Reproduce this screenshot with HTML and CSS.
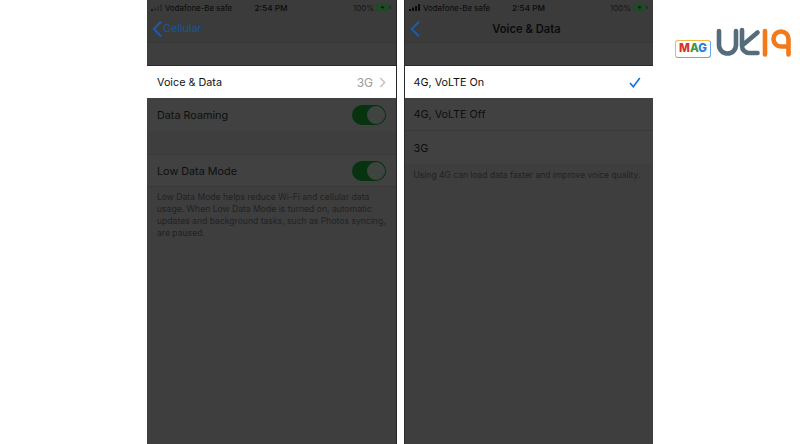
FILE: index.html
```html
<!DOCTYPE html>
<html lang="en">
<head>
<meta charset="utf-8">
<title>Voice &amp; Data</title>
<link rel="stylesheet" href="styles.css">
</head>
<body>
<main class="stage">
  <section class="phone phone-left">
    <div class="status">
      <span class="carrier"><svg class="signal" width="11" height="7" viewBox="0 0 11 7"><rect x="0" y="5" width="2" height="2" fill="#1a1a1a"/><rect x="3" y="3.5" width="2" height="3.5" fill="#2c2c2c"/><rect x="6" y="2" width="2" height="5" fill="#2e2e2e"/><rect x="9" y="0" width="2" height="7" fill="#2e2e2e"/></svg>Vodafone-Be safe</span>
      <span class="time">2:54 PM</span>
      <span class="batt">100%<svg width="15" height="7" viewBox="0 0 15 7"><rect width="13" height="7" rx="1.5" fill="#1f4a25"/><rect x="13.4" y="2" width="1.2" height="3" fill="#242424"/><path d="M7 1 4.5 4h2L6 6l2.6-3.2h-2z" fill="#10190f"/></svg></span>
    </div>
    <nav class="navbar">
      <svg class="chev" width="10" height="16" viewBox="0 0 10 16"><path d="M8.5 1.2 1.8 8l6.7 6.8" fill="none" stroke="#1c5ca8" stroke-width="2" stroke-linecap="round"/></svg>
      <span class="back">Cellular</span>
    </nav>
    <div class="band"></div>
    <div class="row row-on">
      <span>Voice &amp; Data</span>
      <span class="value">3G<svg width="7" height="11" viewBox="0 0 7 11"><path d="M1.3 1 5.6 5.5 1.3 10" fill="none" stroke="#c4c4c6" stroke-width="1.5"/></svg></span>
    </div>
    <div class="row"><span>Data Roaming</span><span class="switch"><i class="knob"></i></span></div>
    <div class="spacer"></div>
    <div class="row row-top"><span>Low Data Mode</span><span class="switch"><i class="knob"></i></span></div>
    <p class="note">Low Data Mode helps reduce Wi-Fi and cellular data usage. When Low Data Mode is turned on, automatic updates and background tasks, such as Photos syncing, are paused.</p>
  </section>

  <section class="phone phone-right">
    <div class="status">
      <span class="carrier"><svg class="signal" width="11" height="7" viewBox="0 0 11 7"><rect x="0" y="5" width="2" height="2" fill="#0c0c0c"/><rect x="3" y="3.5" width="2" height="3.5" fill="#0c0c0c"/><rect x="6" y="2" width="2" height="5" fill="#0c0c0c"/><rect x="9" y="0" width="2" height="7" fill="#0c0c0c"/></svg>Vodafone-Be safe</span>
      <span class="time">2:54 PM</span>
      <span class="batt">100%<svg width="15" height="7" viewBox="0 0 15 7"><rect width="13" height="7" rx="1.5" fill="#1f4a25"/><rect x="13.4" y="2" width="1.2" height="3" fill="#242424"/><path d="M7 1 4.5 4h2L6 6l2.6-3.2h-2z" fill="#10190f"/></svg></span>
    </div>
    <nav class="navbar">
      <svg class="chev" width="10" height="16" viewBox="0 0 10 16"><path d="M8.5 1.2 1.8 8l6.7 6.8" fill="none" stroke="#1c5ca8" stroke-width="2" stroke-linecap="round"/></svg>
      <span class="title">Voice &amp; Data</span>
    </nav>
    <div class="band"></div>
    <div class="row row-on">
      <span>4G, VoLTE On</span>
      <svg class="check" width="12" height="11" viewBox="0 0 12 11"><path d="M1 6 4.3 9.7 10.8 1" fill="none" stroke="#0a70e8" stroke-width="1.6"/></svg>
    </div>
    <div class="row row-line"><span>4G, VoLTE Off</span></div>
    <div class="row"><span>3G</span></div>
    <p class="note note-short">Using 4G can load data faster and improve voice quality.</p>
  </section>

  <div class="logo">
    <span class="mag"><b class="m">M</b><b class="a">A</b><b class="g">G</b></span>
    <svg class="mark" width="76" height="32" viewBox="0 0 76 32">
      <path d="M3 4v14a8.5 8.5 0 0 0 17 0V4" fill="none" stroke="#566c7a" stroke-width="4.6" stroke-linecap="round"/>
      <path d="M26 3v16a7 7 0 0 0 7 7h8.5M28 17 41.5 5.5" fill="none" stroke="#566c7a" stroke-width="4.6" stroke-linecap="round" stroke-linejoin="round"/>
      <path d="M49 4v23.5" fill="none" stroke="#f27a1a" stroke-width="4.6" stroke-linecap="round"/>
      <path d="M72.5 12a7.5 7.5 0 1 0-7.5 7.5h7.5M72.5 12v15.5" fill="none" stroke="#f27a1a" stroke-width="4.6" stroke-linecap="round"/>
    </svg>
  </div>
</main>
</body>
</html>
```
FILE: styles.css
```css
* { box-sizing: border-box; }
html, body { margin: 0; height: 100%; background: #fff; overflow: hidden; }
body { font-family: Inter, "Liberation Sans", sans-serif; }
.stage { display: flex; height: 444px; padding-left: 147px; }
.phone { display: flex; flex-direction: column; height: 444px; background: #3e3e3e; color: #111; }
.phone-left { width: 250px; margin-right: 7px; border-right: 1px solid #262626; }
.phone-right { width: 249px; border-left: 1px solid #2a2a2a; }
.status { display: grid; grid-template-columns: 1fr auto 1fr; align-items: center; height: 15px; padding: 0 5px 0 4px; font-size: 7.9px; color: #0a0a0a; background: #3b3b3b; }
.carrier { display: flex; align-items: center; gap: 3px; }
.batt { display: flex; align-items: center; justify-content: flex-end; gap: 2px; color: #151515; }
.time { font-size: 8.2px; font-weight: 500; }
.navbar { display: flex; align-items: center; height: 28px; padding-left: 5px; gap: 1px; background: #3b3b3b; border-bottom: 1px solid #373737; }
.back { font-size: 10.8px; color: #1c5496; }
.title { flex: 1; padding-right: 21px; text-align: center; font-size: 11.2px; font-weight: 600; color: #0c0c0c; }
.band { height: 23px; background: #3e3e3e; border-bottom: 1px solid #2a2a2a; }
.row { display: flex; justify-content: space-between; align-items: center; flex: none; height: 33px; padding: 1px 10px 0; font-size: 10.8px; background: #414141; color: #0e0e0e; }
.row-on { height: 32px; padding-top: 0; background: #fff; color: #111; }
.row-top { border-top: 1px solid #393939; border-bottom: 1px solid #393939; }
.row-line { border-bottom: 1px solid #393939; }
.phone-left .row-on { padding-right: 10px; }
.phone-right .row-on { padding-right: 12px; }
.phone-right .row { padding-left: 8.5px; }
.value { display: flex; align-items: center; gap: 6px; font-size: 12px; color: #9a9a9c; }
.spacer { height: 23px; flex: none; }
.switch { display: flex; justify-content: flex-end; align-items: center; width: 34px; height: 20px; border-radius: 10px; background: #08330f; padding: 1px; }
.knob { display: block; width: 18px; height: 18px; border-radius: 50%; background: #404440; }
.note { margin: 4px 0 0; padding: 0 10px; font-size: 8.6px; line-height: 12px; color: #222; }
.note-short { margin-top: 5px; padding: 0 0 0 8.5px; font-size: 8.5px; white-space: nowrap; }
.logo { display: flex; align-items: flex-end; gap: 5px; margin: 27px 0 0 22px; height: 32px; }
.mag { display: block; width: 36px; height: 18px; margin-bottom: 1px; text-align: center; font-size: 11.5px; line-height: 15px; border: 1.5px solid #f5b84a; border-right-color: #6aa6e8; border-bottom-color: #6aa6e8; border-radius: 3px; }
.mag b { font-weight: 800; }
.m { color: #d8322a; }
.a { color: #3a9a4a; }
.g { color: #2a7ad8; }
.mark { display: block; }
```
